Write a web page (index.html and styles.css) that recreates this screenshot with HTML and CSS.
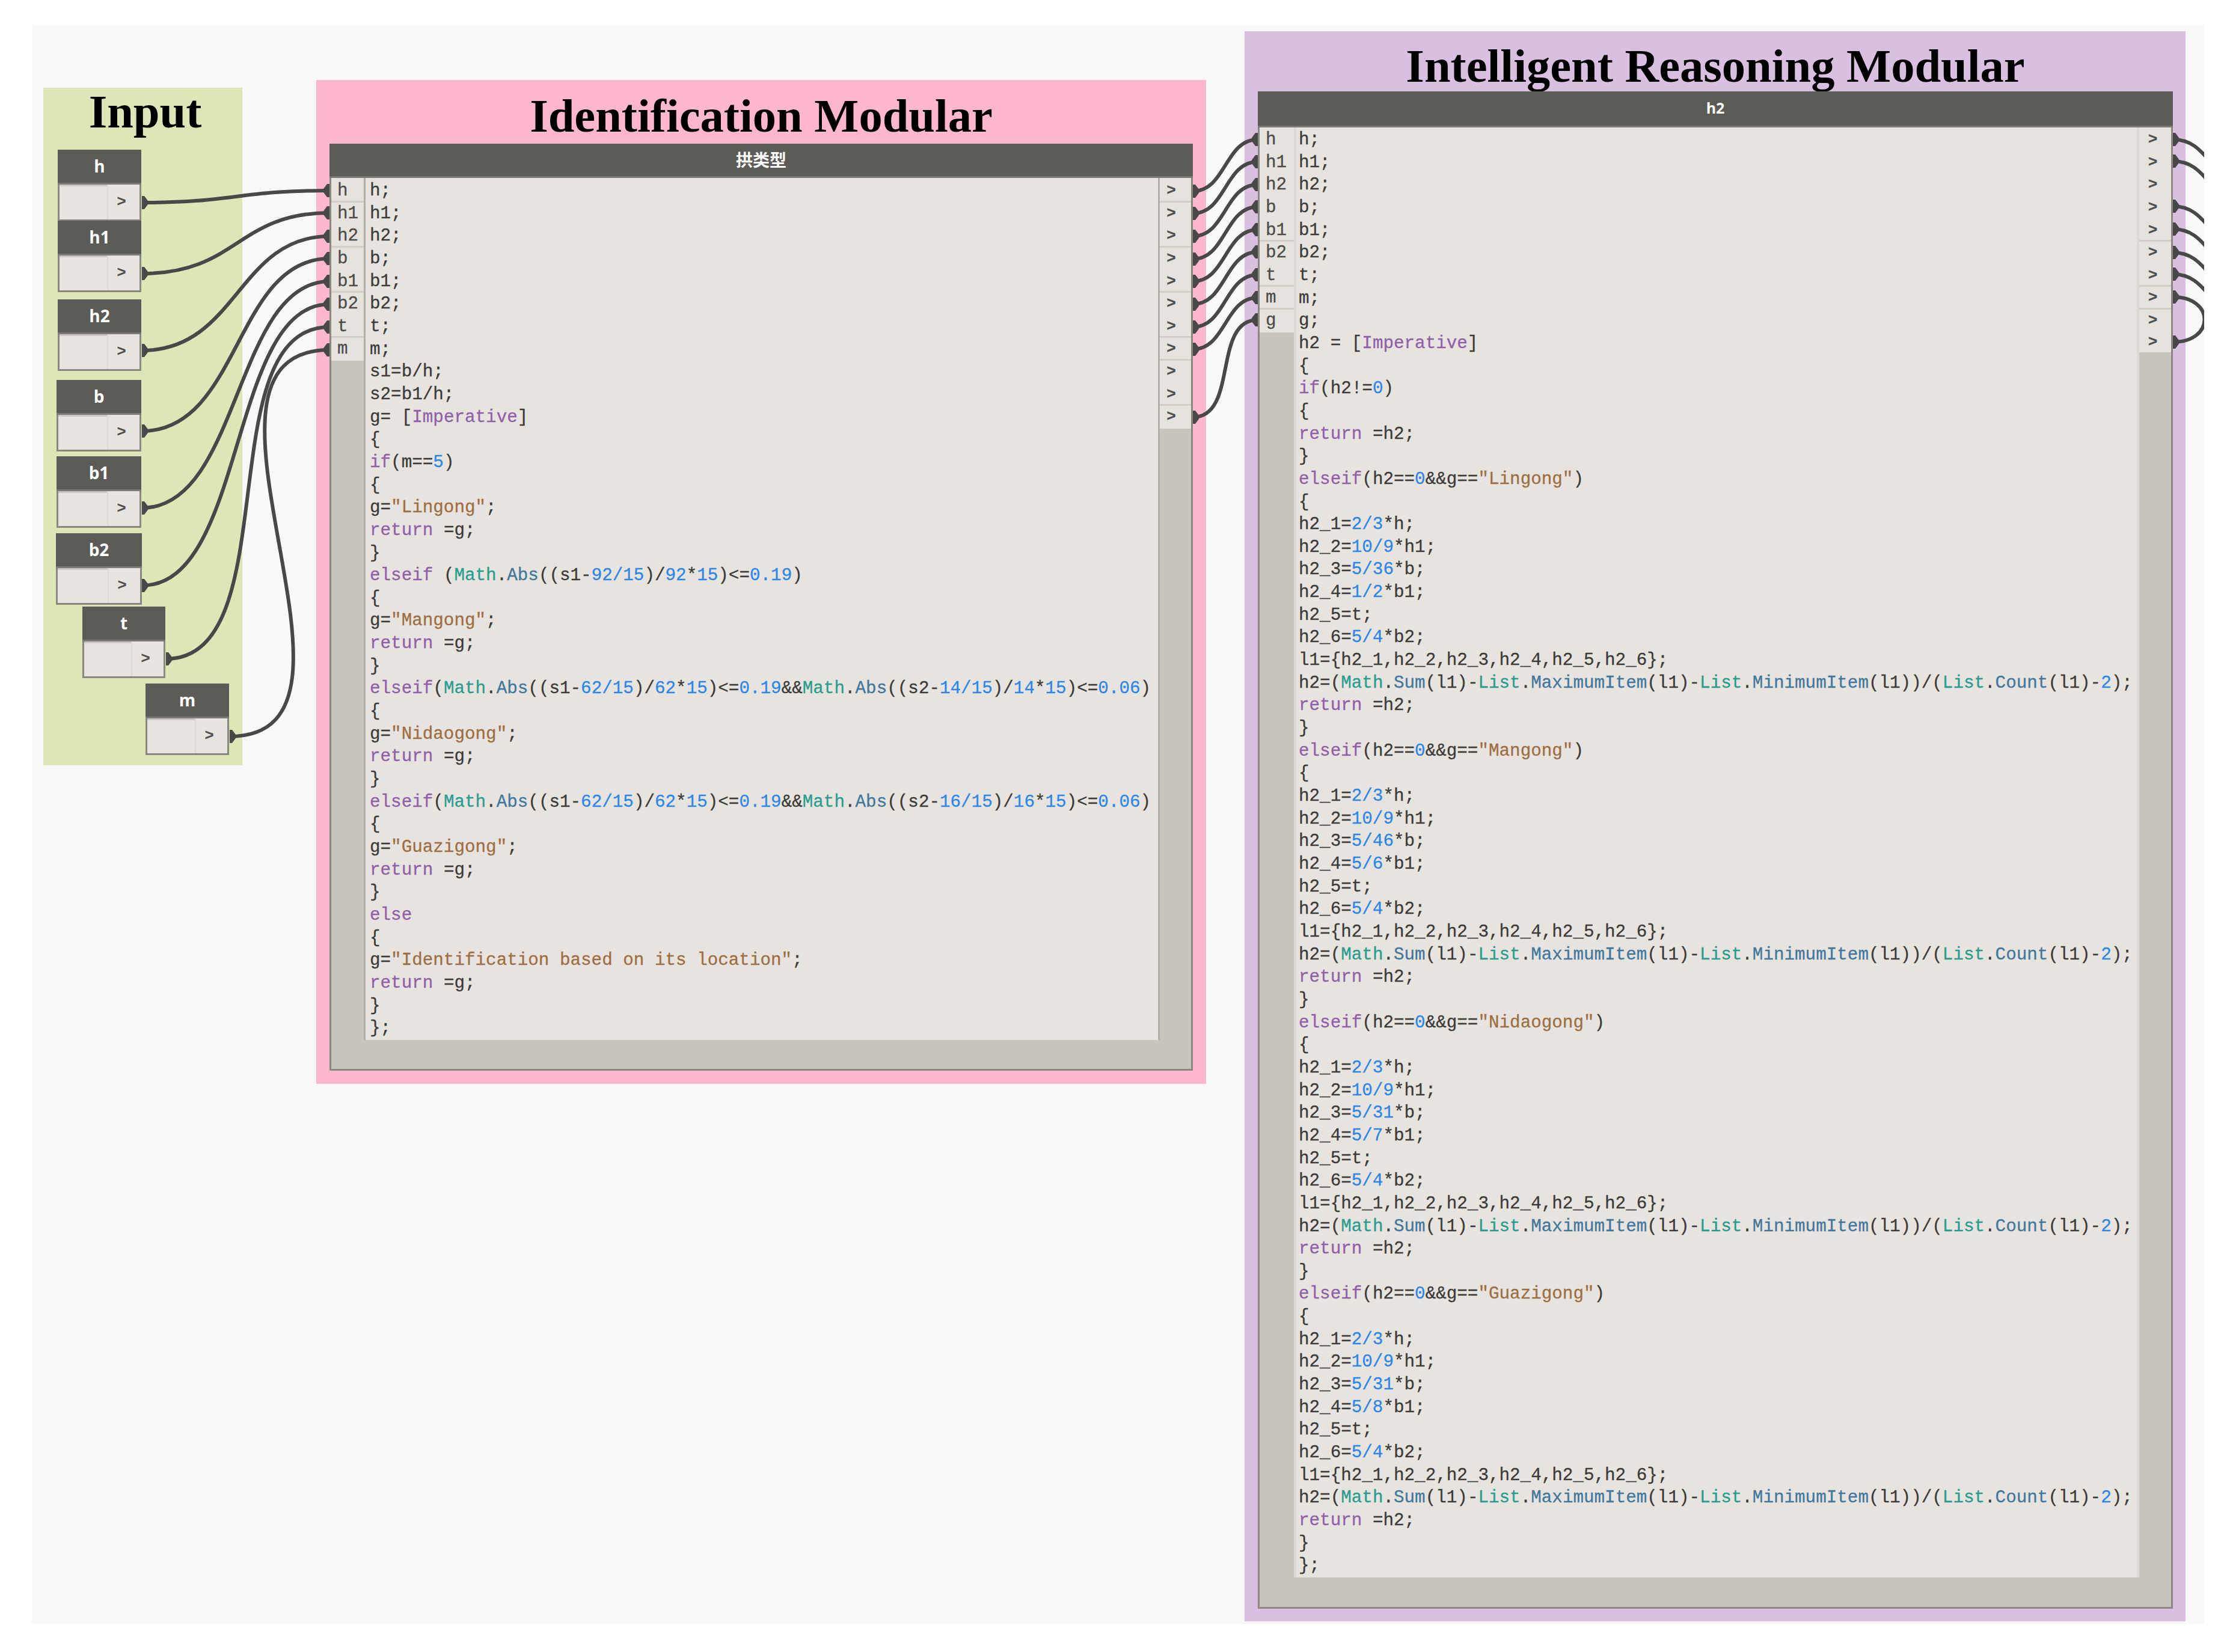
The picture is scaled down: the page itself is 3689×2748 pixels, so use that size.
FILE: index.html
```html
<!DOCTYPE html>
<html lang="en">
<head>
<meta charset="utf-8">
<title>Dynamo graph</title>
<link rel="stylesheet" href="styles.css">
</head>
<body>
<main class="canvas">
  <section class="group group-input">
    <h2 class="group-title">Input</h2>
    <div class="param p-h"><div class="param-head">h</div><div class="param-body"><div class="param-val"></div><div class="param-out">&gt;</div></div></div>
    <div class="param p-h1"><div class="param-head">h1</div><div class="param-body"><div class="param-val"></div><div class="param-out">&gt;</div></div></div>
    <div class="param p-h2"><div class="param-head">h2</div><div class="param-body"><div class="param-val"></div><div class="param-out">&gt;</div></div></div>
    <div class="param p-b"><div class="param-head">b</div><div class="param-body"><div class="param-val"></div><div class="param-out">&gt;</div></div></div>
    <div class="param p-b1"><div class="param-head">b1</div><div class="param-body"><div class="param-val"></div><div class="param-out">&gt;</div></div></div>
    <div class="param p-b2"><div class="param-head">b2</div><div class="param-body"><div class="param-val"></div><div class="param-out">&gt;</div></div></div>
    <div class="param p-t"><div class="param-head">t</div><div class="param-body"><div class="param-val"></div><div class="param-out">&gt;</div></div></div>
    <div class="param p-m"><div class="param-head">m</div><div class="param-body"><div class="param-val"></div><div class="param-out">&gt;</div></div></div>
  </section>

  <section class="group group-id">
    <h2 class="group-title">Identification Modular</h2>
    <div class="node node-a">
      <div class="node-head cjk">拱类型</div>
      <div class="node-body">
        <div class="ports">
          <div class="rows">
            <div class="row sep">h</div><div class="row">h1</div><div class="row sep">h2</div><div class="row">b</div><div class="row sep">b1</div><div class="row">b2</div><div class="row sep">t</div><div class="row">m</div>
          </div>
        </div>
<pre class="code">h;
h1;
h2;
b;
b1;
b2;
t;
m;
s1=b/h;
s2=b1/h;
g= [<span class="k">Imperative</span>]
{
<span class="k">if</span>(m==<span class="n">5</span>)
{
g=<span class="s">"Lingong"</span>;
<span class="k">return</span> =g;
}
<span class="k">elseif</span> (<span class="c">Math</span>.<span class="m">Abs</span>((s1-<span class="n">92/15</span>)/<span class="n">92</span>*<span class="n">15</span>)&lt;=<span class="n">0.19</span>)
{
g=<span class="s">"Mangong"</span>;
<span class="k">return</span> =g;
}
<span class="k">elseif</span>(<span class="c">Math</span>.<span class="m">Abs</span>((s1-<span class="n">62/15</span>)/<span class="n">62</span>*<span class="n">15</span>)&lt;=<span class="n">0.19</span>&amp;&amp;<span class="c">Math</span>.<span class="m">Abs</span>((s2-<span class="n">14/15</span>)/<span class="n">14</span>*<span class="n">15</span>)&lt;=<span class="n">0.06</span>)
{
g=<span class="s">"Nidaogong"</span>;
<span class="k">return</span> =g;
}
<span class="k">elseif</span>(<span class="c">Math</span>.<span class="m">Abs</span>((s1-<span class="n">62/15</span>)/<span class="n">62</span>*<span class="n">15</span>)&lt;=<span class="n">0.19</span>&amp;&amp;<span class="c">Math</span>.<span class="m">Abs</span>((s2-<span class="n">16/15</span>)/<span class="n">16</span>*<span class="n">15</span>)&lt;=<span class="n">0.06</span>)
{
g=<span class="s">"Guazigong"</span>;
<span class="k">return</span> =g;
}
<span class="k">else</span>
{
g=<span class="s">"Identification based on its location"</span>;
<span class="k">return</span> =g;
}
};</pre>
        <div class="outs">
          <div class="rows">
            <div class="row sep">&gt;</div><div class="row">&gt;</div><div class="row sep">&gt;</div><div class="row">&gt;</div><div class="row sep">&gt;</div><div class="row">&gt;</div><div class="row sep">&gt;</div><div class="row sep">&gt;</div><div class="row">&gt;</div><div class="row sep">&gt;</div><div class="row">&gt;</div>
          </div>
        </div>
      </div>
    </div>
  </section>

  <section class="group group-ir">
    <h2 class="group-title">Intelligent Reasoning Modular</h2>
    <div class="node node-b">
      <div class="node-head">h2</div>
      <div class="node-body">
        <div class="ports">
          <div class="rows">
            <div class="row">h</div><div class="row">h1</div><div class="row">h2</div><div class="row">b</div><div class="row sep">b1</div><div class="row">b2</div><div class="row sep">t</div><div class="row sep">m</div><div class="row">g</div>
          </div>
        </div>
<pre class="code">h;
h1;
h2;
b;
b1;
b2;
t;
m;
g;
h2 = [<span class="k">Imperative</span>]
{
<span class="k">if</span>(h2!=<span class="n">0</span>)
{
<span class="k">return</span> =h2;
}
<span class="k">elseif</span>(h2==<span class="n">0</span>&amp;&amp;g==<span class="s">"Lingong"</span>)
{
h2_1=<span class="n">2/3</span>*h;
h2_2=<span class="n">10/9</span>*h1;
h2_3=<span class="n">5/36</span>*b;
h2_4=<span class="n">1/2</span>*b1;
h2_5=t;
h2_6=<span class="n">5/4</span>*b2;
l1={h2_1,h2_2,h2_3,h2_4,h2_5,h2_6};
h2=(<span class="c">Math</span>.<span class="m">Sum</span>(l1)-<span class="c">List</span>.<span class="m">MaximumItem</span>(l1)-<span class="c">List</span>.<span class="m">MinimumItem</span>(l1))/(<span class="c">List</span>.<span class="m">Count</span>(l1)-<span class="n">2</span>);
<span class="k">return</span> =h2;
}
<span class="k">elseif</span>(h2==<span class="n">0</span>&amp;&amp;g==<span class="s">"Mangong"</span>)
{
h2_1=<span class="n">2/3</span>*h;
h2_2=<span class="n">10/9</span>*h1;
h2_3=<span class="n">5/46</span>*b;
h2_4=<span class="n">5/6</span>*b1;
h2_5=t;
h2_6=<span class="n">5/4</span>*b2;
l1={h2_1,h2_2,h2_3,h2_4,h2_5,h2_6};
h2=(<span class="c">Math</span>.<span class="m">Sum</span>(l1)-<span class="c">List</span>.<span class="m">MaximumItem</span>(l1)-<span class="c">List</span>.<span class="m">MinimumItem</span>(l1))/(<span class="c">List</span>.<span class="m">Count</span>(l1)-<span class="n">2</span>);
<span class="k">return</span> =h2;
}
<span class="k">elseif</span>(h2==<span class="n">0</span>&amp;&amp;g==<span class="s">"Nidaogong"</span>)
{
h2_1=<span class="n">2/3</span>*h;
h2_2=<span class="n">10/9</span>*h1;
h2_3=<span class="n">5/31</span>*b;
h2_4=<span class="n">5/7</span>*b1;
h2_5=t;
h2_6=<span class="n">5/4</span>*b2;
l1={h2_1,h2_2,h2_3,h2_4,h2_5,h2_6};
h2=(<span class="c">Math</span>.<span class="m">Sum</span>(l1)-<span class="c">List</span>.<span class="m">MaximumItem</span>(l1)-<span class="c">List</span>.<span class="m">MinimumItem</span>(l1))/(<span class="c">List</span>.<span class="m">Count</span>(l1)-<span class="n">2</span>);
<span class="k">return</span> =h2;
}
<span class="k">elseif</span>(h2==<span class="n">0</span>&amp;&amp;g==<span class="s">"Guazigong"</span>)
{
h2_1=<span class="n">2/3</span>*h;
h2_2=<span class="n">10/9</span>*h1;
h2_3=<span class="n">5/31</span>*b;
h2_4=<span class="n">5/8</span>*b1;
h2_5=t;
h2_6=<span class="n">5/4</span>*b2;
l1={h2_1,h2_2,h2_3,h2_4,h2_5,h2_6};
h2=(<span class="c">Math</span>.<span class="m">Sum</span>(l1)-<span class="c">List</span>.<span class="m">MaximumItem</span>(l1)-<span class="c">List</span>.<span class="m">MinimumItem</span>(l1))/(<span class="c">List</span>.<span class="m">Count</span>(l1)-<span class="n">2</span>);
<span class="k">return</span> =h2;
}
};</pre>
        <div class="outs">
          <div class="rows">
            <div class="row">&gt;</div><div class="row">&gt;</div><div class="row">&gt;</div><div class="row">&gt;</div><div class="row sep">&gt;</div><div class="row">&gt;</div><div class="row sep">&gt;</div><div class="row sep">&gt;</div><div class="row">&gt;</div><div class="row">&gt;</div>
          </div>
        </div>
      </div>
    </div>
  </section>

  <svg class="wires" viewBox="53 42 3613 2659" width="3613" height="2659" aria-hidden="true">
    <defs>
      <path id="so" d="M0 -11H4L10 -3V3L4 11H0Z"/>
      <path id="si" d="M0 -11H-4L-10 -3V3L-4 11H0Z"/>
    </defs>
    <g class="wire">
      <path d="M236 337C390 337 395 317 548 317"/>
      <path d="M236 455C395 455 395 354 548 354"/>
      <path d="M236 583C395 583 395 393 548 393"/>
      <path d="M236 717C400 717 390 430 548 430"/>
      <path d="M236 845C400 845 390 468 548 468"/>
      <path d="M236 974C410 974 380 506 548 506"/>
      <path d="M276 1096C480 1096 345 544 548 544"/>
      <path d="M382 1225C662 1225 265 582 548 582"/>
      <path d="M1984 318C2039 318 2037 232 2092 232"/>
      <path d="M1984 355C2039 355 2037 269 2092 269"/>
      <path d="M1984 393C2039 393 2037 307 2092 307"/>
      <path d="M1984 431C2039 431 2037 344 2092 344"/>
      <path d="M1984 468C2039 468 2037 382 2092 382"/>
      <path d="M1984 506C2039 506 2037 419 2092 419"/>
      <path d="M1984 544C2039 544 2037 457 2092 457"/>
      <path d="M1984 581C2039 581 2037 495 2092 495"/>
      <path d="M1984 694C2060 694 2016 532 2092 532"/>
      <path d="M3614 232C3660 232 3670 272 3700 290"/>
      <path d="M3614 268C3660 268 3670 308 3700 326"/>
      <path d="M3614 343C3660 343 3670 383 3700 401"/>
      <path d="M3614 381C3660 381 3670 421 3700 439"/>
      <path d="M3614 420C3660 420 3670 460 3700 478"/>
      <path d="M3614 456C3660 456 3670 496 3700 514"/>
      <path d="M3614 494C3684 494 3684 569 3614 569"/>
    </g>
    <g class="stub">
      <use href="#so" x="236" y="337"/><use href="#so" x="236" y="455"/><use href="#so" x="236" y="583"/><use href="#so" x="236" y="717"/>
      <use href="#so" x="236" y="845"/><use href="#so" x="236" y="974"/><use href="#so" x="276" y="1096"/><use href="#so" x="382" y="1225"/>
      <use href="#si" x="548" y="317"/><use href="#si" x="548" y="354"/><use href="#si" x="548" y="393"/><use href="#si" x="548" y="430"/>
      <use href="#si" x="548" y="468"/><use href="#si" x="548" y="506"/><use href="#si" x="548" y="544"/><use href="#si" x="548" y="582"/>
      <use href="#so" x="1984" y="318"/><use href="#so" x="1984" y="355"/><use href="#so" x="1984" y="393"/><use href="#so" x="1984" y="431"/>
      <use href="#so" x="1984" y="468"/><use href="#so" x="1984" y="506"/><use href="#so" x="1984" y="544"/><use href="#so" x="1984" y="581"/><use href="#so" x="1984" y="694"/>
      <use href="#si" x="2092" y="232"/><use href="#si" x="2092" y="269"/><use href="#si" x="2092" y="307"/><use href="#si" x="2092" y="344"/>
      <use href="#si" x="2092" y="382"/><use href="#si" x="2092" y="419"/><use href="#si" x="2092" y="457"/><use href="#si" x="2092" y="495"/><use href="#si" x="2092" y="532"/>
      <use href="#so" x="3614" y="232"/><use href="#so" x="3614" y="268"/><use href="#so" x="3614" y="343"/><use href="#so" x="3614" y="381"/>
      <use href="#so" x="3614" y="420"/><use href="#so" x="3614" y="456"/><use href="#so" x="3614" y="494"/><use href="#so" x="3614" y="569"/>
    </g>
  </svg>
</main>
</body>
</html>
```
FILE: styles.css
```css
* { box-sizing: border-box; }
html, body { margin: 0; padding: 0; background: #fff; }
body { width: 3689px; height: 2748px; overflow: hidden; padding: 42px 0 0 53px; }

.canvas {
  position: relative;
  width: 3613px;
  height: 2659px;
  background: #f9f9f9;
  overflow: hidden;
  font-family: "Liberation Mono", "DejaVu Sans Mono", monospace;
}

.group { position: absolute; display: flex; flex-direction: column; }
.group-title {
  margin: 0;
  font: bold 78.5px/1 "Liberation Serif", "Times New Roman", serif;
  color: #000;
  text-align: center;
  white-space: nowrap;
}
.group-input { left: 19px; top: 104px; width: 331px; height: 1127px; background: #dde6b6; }
.group-input .group-title { padding: 1px 0 0 8px; }
.group-id { left: 473px; top: 91px; width: 1480px; height: 1670px; background: #ffb6cf; padding: 0 22px 22px; }
.group-id .group-title { height: 106px; padding-top: 21px; }
.group-ir { left: 2017px; top: 10px; width: 1565px; height: 2645px; background: #d9bfe0; padding: 0 21px 21px 22px; }
.group-ir .group-title { height: 100px; padding-top: 19px; }

.node { flex: 1; display: flex; flex-direction: column; min-height: 0; }
.node-head, .param-head {
  background: #5d5b58;
  border-bottom: 3px solid #7a7875;
  color: #fff;
  font-family: "Open Sans", "Liberation Sans", sans-serif;
  font-weight: 700;
  text-align: center;
  flex: none;
}
.node-head { height: var(--head); line-height: calc(var(--head) - 5px); font-size: 25px; }
.node-head.cjk { font-family: "Noto Sans CJK SC", sans-serif; font-size: 28px; }

.node-body {
  flex: 1;
  display: flex;
  align-items: stretch;
  background: #c9c5be;
  border: solid #8a8780;
  border-width: 0 3px 3px;
  min-height: 0;
}
.node-a { --head: 57px; --pad: 3px; --sep: #b2afa9; --ports: 54px; --outs: 52px; --out-shift: 14px; --code-gap: 7px; --sep-w: 3px; }
.node-b { --head: 60px; --pad: 2px; --sep: #dcd9d4; --ports: 57px; --outs: 53px; --out-shift: 8px; --code-gap: 4px; --sep-w: 4px; }

.ports { width: var(--ports); flex: none; }
.outs { width: var(--outs); flex: none; }
.rows { background: #e6e3df; padding-top: var(--pad); }
.row {
  height: 37.65px;
  line-height: 37.65px;
  font-size: 29.25px;
  padding-left: 10px;
  color: #4c4b48;
  -webkit-text-stroke: 0.3px;
}
.row.sep { box-shadow: inset 0 -3px 0 #d2cfc9; }
.outs .row {
  padding: 0 var(--out-shift) 0 0;
  text-align: center;
  font-size: 26px;
  font-weight: 700;
  color: #4f4f4f;
}
.node-b .outs .row:last-child { height: 33px; line-height: 33px; }

.code {
  flex: 1;
  align-self: flex-start;
  margin: 0;
  padding: var(--pad) 0 0 var(--code-gap);
  background: #e7e4e0;
  border: solid var(--sep);
  border-width: 0 var(--sep-w);
  color: #3b3a38;
  font: 29.25px/37.65px "Liberation Mono", "DejaVu Sans Mono", monospace;
  white-space: pre;
  -webkit-text-stroke: 0.3px;
}
.k { color: #8f5fa8; }
.n { color: #2e86e4; }
.c { color: #2a9c8e; }
.m { color: #42779b; }
.s { color: #9c6e42; }

.param { position: absolute; display: flex; flex-direction: column; }
.param-head { height: 58px; line-height: 54px; font-size: 28px; }
.param-body { flex: 1; display: flex; background: #e7e4e0; border: solid #8a8780; border-width: 0 3px 3px; }
.param-val { flex: 1; border-top: 3px solid #c9c7c3; }
.param-out {
  width: 54px;
  padding-right: 8px;
  border-left: 2px solid #dcdad7;
  color: #4f4f4f;
  font-weight: 700;
  font-size: 26px;
  text-align: center;
  line-height: 58px;
}
.p-h { left: 24px; top: 103px; width: 139px; height: 114px; }
.p-h1 { left: 24px; top: 221px; width: 139px; height: 115px; }
.p-h2 { left: 24px; top: 352px; width: 139px; height: 111px; }
.p-b { left: 22px; top: 486px; width: 141px; height: 112px; }
.p-b1 { left: 22px; top: 613px; width: 141px; height: 112px; }
.p-b2 { left: 21px; top: 741px; width: 143px; height: 112px; }
.p-t { left: 65px; top: 863px; width: 138px; height: 114px; }
.p-m { left: 170px; top: 991px; width: 139px; height: 114px; }

.wires { position: absolute; left: 0; top: 0; pointer-events: none; }
.wire path { fill: none; stroke: #484848; stroke-width: 6px; }
.stub { fill: #484848; }
```
